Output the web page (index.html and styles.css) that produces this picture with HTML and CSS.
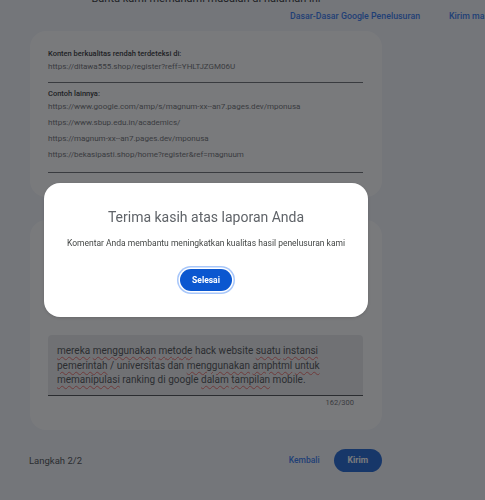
FILE: index.html
```html
<!DOCTYPE html>
<html lang="id">
<head>
<meta charset="utf-8">
<title>Laporan spam</title>
<link rel="stylesheet" href="styles.css">
</head>
<body>
<div class="page">
  <p class="intro">Bantu kami memahami masalah di halaman ini</p>
  <nav class="links">
    <a href="#">Dasar-Dasar Google Penelusuran</a>
    <a href="#">Kirim masukan</a>
  </nav>

  <section class="card">
    <div class="label">Konten berkualitas rendah terdeteksi di:</div>
    <div class="url first">https://ditawa555.shop/register?reff=YHLTJZGM06U</div>
    <hr class="divider">
    <div class="label">Contoh lainnya:</div>
    <div class="url">https://www.google.com/amp/s/magnum-xx--an7.pages.dev/mponusa</div>
    <div class="url">https://www.sbup.edu.in/academics/</div>
    <div class="url">https://magnum-xx--an7.pages.dev/mponusa</div>
    <div class="url">https://bekasipasti.shop/home?register&amp;ref=magnuum</div>
    <hr class="divider last">
  </section>

  <section class="card card-comment">
    <div class="field">
      <div class="field-text"><span class="sp">mereka</span> <span class="sp">menggunakan</span> <span class="sp">metode</span> hack website <span class="sp">suatu</span> <span class="sp">instansi</span> <span class="sp">pemerintah</span> / universitas dan <span class="sp">menggunakan</span> <span class="sp">amphtml</span> <span class="sp">untuk</span> <span class="sp">memanipulasi</span> ranking di google <span class="sp">dalam</span> <span class="sp">tampilan</span> mobile.</div>
    </div>
    <div class="counter">162/300</div>
  </section>

  <footer class="footer">
    <span class="step">Langkah 2/2</span>
    <div class="actions">
      <a href="#" class="back">Kembali</a>
      <button class="send" type="button">Kirim</button>
    </div>
  </footer>
</div>

<div class="scrim"></div>

<div class="dialog" role="dialog">
  <h2 class="dialog-title">Terima kasih atas laporan Anda</h2>
  <p class="dialog-text">Komentar Anda membantu meningkatkan kualitas hasil penelusuran kami</p>
  <button class="done" type="button">Selesai</button>
</div>
</body>
</html>
```

FILE: styles.css
```css
* { box-sizing: border-box; }

html, body {
  margin: 0;
  padding: 0;
  height: 100%;
  overflow: hidden;
}

body {
  background: #f2f5fb;
  font-family: Roboto, "Noto Sans", Arial, sans-serif;
  color: #202124;
}

.page {
  width: 352px;
  margin-left: 30px;
}

.intro {
  margin: -8px 0 0;
  font-size: 11px;
  line-height: 14px;
  text-align: center;
  color: #202124;
}

.links {
  display: flex;
  gap: 29px;
  margin-top: 4px;
  padding-left: 260px;
  white-space: nowrap;
  font-size: 8.8px;
  line-height: 12px;
  font-weight: 500;
}

.links a {
  color: #1f6ff0;
  text-decoration: none;
}

.card {
  background: #ffffff;
  border-radius: 16px;
  margin-top: 9px;
  padding: 18px 19px 24px 18px;
}

.label {
  font-size: 7.5px;
  line-height: 10px;
  font-weight: 500;
  color: #202124;
}

.url {
  font-size: 8px;
  line-height: 16px;
  color: #5f6368;
}

.url.first {
  line-height: 12px;
  margin-top: 2px;
}

.divider {
  border: 0;
  border-top: 1px solid #5f6368;
  margin: 9px 0 6px;
}

.divider.last {
  margin: 9px 0 0;
}

.card-comment {
  margin-top: 23px;
  padding: 115px 19px 22px 18px;
}

.field {
  background: #e8e9ec;
  border-bottom: 1px solid #3c4043;
  padding: 9px 40px 7px 9px;
  border-radius: 4px 4px 0 0;
}

.field-text {
  font-size: 10px;
  line-height: 14.5px;
  color: #3c4043;
}

.sp {
  text-decoration: underline wavy #e8625d;
  text-decoration-thickness: 0.8px;
  text-underline-offset: 2px;
}

.counter {
  margin-top: 2px;
  padding-right: 9px;
  text-align: right;
  font-size: 7.5px;
  line-height: 10px;
  color: #5f6368;
}

.footer {
  display: flex;
  align-items: center;
  justify-content: space-between;
  margin-top: 19px;
}

.step {
  font-size: 9.5px;
  color: #3c4043;
  margin-left: -1px;
}

.actions {
  display: flex;
  align-items: center;
  gap: 14px;
}

.back {
  font-size: 8.5px;
  font-weight: 500;
  color: #1f6ff0;
  text-decoration: none;
}

.send {
  height: 23px;
  padding: 0 14px;
  border: 0;
  border-radius: 12px;
  background: #0b57d0;
  color: #ffffff;
  font-family: inherit;
  font-size: 8.5px;
  font-weight: 700;
}

.scrim {
  position: fixed;
  inset: 0;
  background: rgba(32, 33, 36, 0.6);
}

.dialog {
  position: fixed;
  left: 44px;
  top: 183px;
  width: 324px;
  height: 134px;
  background: #ffffff;
  border-radius: 16px;
  box-shadow: 0 1px 3px rgba(0, 0, 0, 0.15);
  display: flex;
  flex-direction: column;
  align-items: center;
  padding-top: 24px;
}

.dialog-title {
  margin: 0;
  font-size: 14px;
  line-height: 20px;
  font-weight: 400;
  color: #5f6368;
}

.dialog-text {
  margin: 10px 0 0;
  font-size: 8.5px;
  line-height: 12px;
  color: #444746;
}

.done {
  margin-top: 20px;
  width: 52px;
  height: 22px;
  border: 0;
  border-radius: 11px;
  background: #0b57d0;
  color: #ffffff;
  font-family: inherit;
  font-size: 8.5px;
  font-weight: 700;
  box-shadow: 0 0 0 1.5px #ffffff, 0 0 0 3px #a8c7fa;
}
```
